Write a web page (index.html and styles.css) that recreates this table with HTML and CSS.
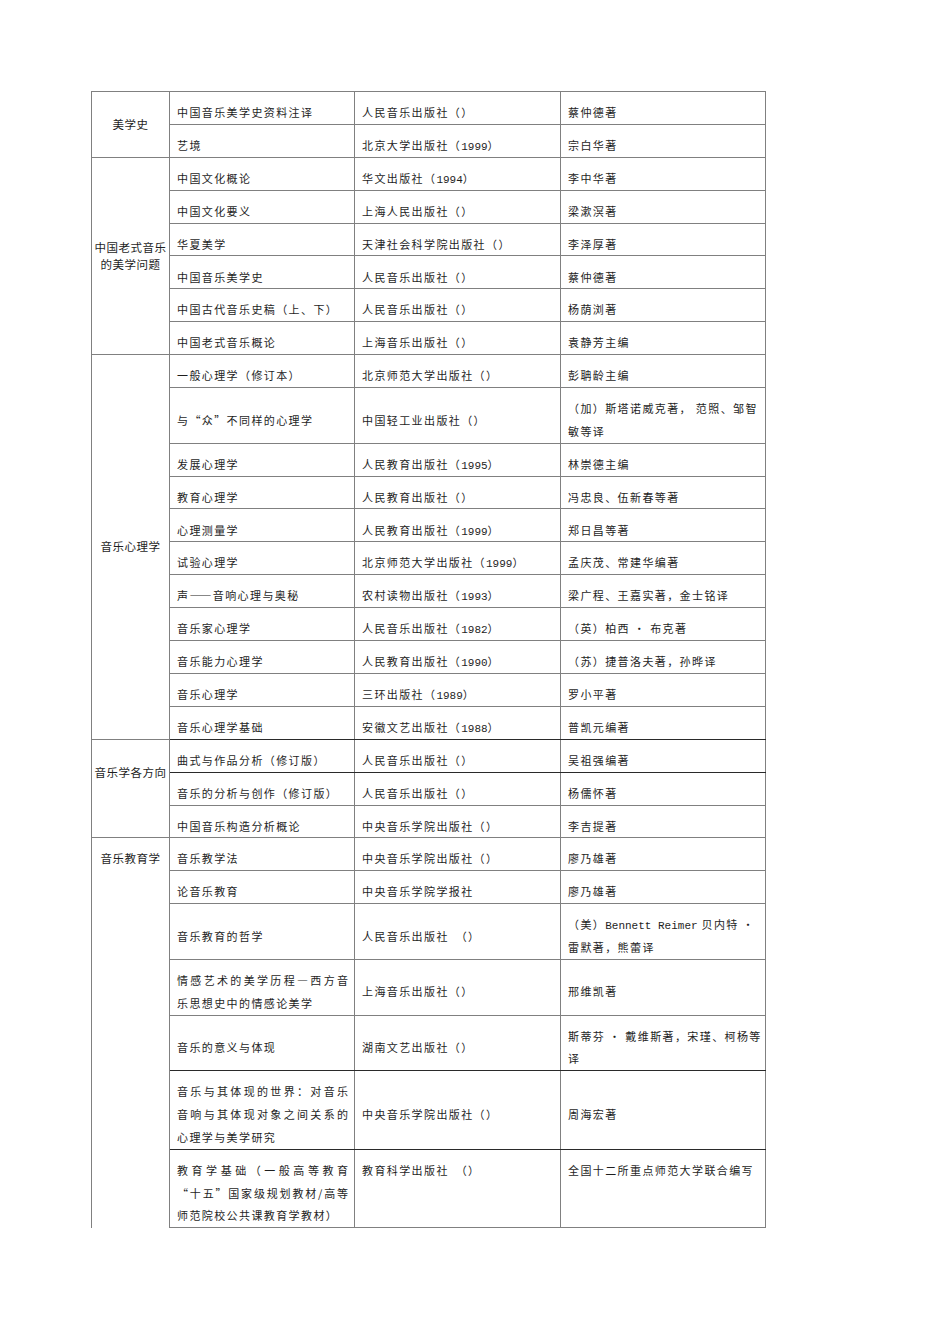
FILE: index.html
```html
<!DOCTYPE html>
<html lang="zh">
<head>
<meta charset="utf-8">
<title>参考书目</title>
<link rel="stylesheet" href="styles.css">
</head>
<body>
<table class="books">
<colgroup><col class="c1"><col class="c2"><col class="c3"><col class="c4"></colgroup>
<tr><td rowspan="2" class="cat mid">美学史</td><td>中国音乐美学史资料注译</td><td>人民音乐出版社（）</td><td>蔡仲德著</td></tr>
<tr><td>艺境</td><td>北京大学出版社（<span class="num">1999</span>）</td><td>宗白华著</td></tr>
<tr><td rowspan="6" class="cat mid tight">中国老式音乐<br>的美学问题</td><td>中国文化概论</td><td>华文出版社（<span class="num">1994</span>）</td><td>李中华著</td></tr>
<tr><td>中国文化要义</td><td>上海人民出版社（）</td><td>梁漱溟著</td></tr>
<tr><td>华夏美学</td><td>天津社会科学院出版社（）</td><td>李泽厚著</td></tr>
<tr><td>中国音乐美学史</td><td>人民音乐出版社（）</td><td>蔡仲德著</td></tr>
<tr><td>中国古代音乐史稿（上、下）</td><td>人民音乐出版社（）</td><td>杨荫浏著</td></tr>
<tr><td>中国老式音乐概论</td><td>上海音乐出版社（）</td><td>袁静芳主编</td></tr>
<tr><td rowspan="11" class="cat mid">音乐心理学</td><td>一般心理学（修订本）</td><td>北京师范大学出版社（）</td><td>彭聃龄主编</td></tr>
<tr><td class="mid">与“众”不同样的心理学</td><td class="mid">中国轻工业出版社（）</td><td><span class="line">（加）斯塔诺威克著， 范照、邹智</span><span class="line">敏等译</span></td></tr>
<tr><td>发展心理学</td><td>人民教育出版社（<span class="num">1995</span>）</td><td>林崇德主编</td></tr>
<tr><td>教育心理学</td><td>人民教育出版社（）</td><td>冯忠良、伍新春等著</td></tr>
<tr><td>心理测量学</td><td>人民教育出版社（<span class="num">1999</span>）</td><td>郑日昌等著</td></tr>
<tr><td>试验心理学</td><td>北京师范大学出版社（<span class="num">1999</span>）</td><td>孟庆茂、常建华编著</td></tr>
<tr><td>声——音响心理与奥秘</td><td>农村读物出版社（<span class="num">1993</span>）</td><td>梁广程、王嘉实著，金士铭译</td></tr>
<tr><td>音乐家心理学</td><td>人民音乐出版社（<span class="num">1982</span>）</td><td>（英）柏西 · 布克著</td></tr>
<tr><td>音乐能力心理学</td><td>人民教育出版社（<span class="num">1990</span>）</td><td>（苏）捷普洛夫著，孙晔译</td></tr>
<tr><td>音乐心理学</td><td>三环出版社（<span class="num">1989</span>）</td><td>罗小平著</td></tr>
<tr class="dk"><td>音乐心理学基础</td><td>安徽文艺出版社（<span class="num">1988</span>）</td><td>普凯元编著</td></tr>
<tr><td rowspan="3" class="cat top dir">音乐学各方向</td><td class="dkb">曲式与作品分析（修订版）</td><td class="dkb">人民音乐出版社（）</td><td class="dkb">吴祖强编著</td></tr>
<tr><td>音乐的分析与创作（修订版）</td><td>人民音乐出版社（）</td><td>杨儒怀著</td></tr>
<tr><td>中国音乐构造分析概论</td><td>中央音乐学院出版社（）</td><td>李吉提著</td></tr>
<tr><td rowspan="7" class="cat top last">音乐教育学</td><td>音乐教学法</td><td>中央音乐学院出版社（）</td><td>廖乃雄著</td></tr>
<tr><td>论音乐教育</td><td>中央音乐学院学报社</td><td>廖乃雄著</td></tr>
<tr><td class="mid">音乐教育的哲学</td><td class="mid">人民音乐出版社　（）</td><td><span class="line">（美）<span class="num">Bennett Reimer</span> 贝内特 ·</span><span class="line">雷默著，熊蕾译</span></td></tr>
<tr><td><span class="line j">情感艺术的美学历程—西方音</span><span class="line">乐思想史中的情感论美学</span></td><td class="mid">上海音乐出版社（）</td><td class="mid">邢维凯著</td></tr>
<tr class="dk"><td class="mid">音乐的意义与体现</td><td class="mid">湖南文艺出版社（）</td><td><span class="line">斯蒂芬 · 戴维斯著，宋瑾、柯杨等</span><span class="line">译</span></td></tr>
<tr class="dk"><td><span class="line j">音乐与其体现的世界：对音乐</span><span class="line j">音响与其体现对象之间关系的</span><span class="line">心理学与美学研究</span></td><td class="mid">中央音乐学院出版社（）</td><td class="mid">周海宏著</td></tr>
<tr><td><span class="line j">教育学基础（一般高等教育</span><span class="line j">“十五”国家级规划教材/高等</span><span class="line">师范院校公共课教育学教材）</span></td><td>教育科学出版社　（）</td><td>全国十二所重点师范大学联合编写</td></tr>
</table>
</body>
</html>
```
FILE: styles.css
```css
html, body {
  margin: 0;
  padding: 0;
  background: #ffffff;
}

body {
  font-family: "Noto Sans CJK SC", "Noto Sans", sans-serif;
  color: #1e1e1e;
}

.books {
  border-collapse: collapse;
  table-layout: fixed;
  width: 674px;
  margin: 91px 0 0 91px;
  font-size: 11px;
  letter-spacing: 1.4px;
}

.c1 { width: 78px; }
.c2 { width: 185px; }
.c3 { width: 206px; }
.c4 { width: 205px; }

.books td {
  border: 1px solid #808080;
  padding: 9.1px 6px 0 7px;
  line-height: 22.8px;
  vertical-align: middle;
  white-space: nowrap;
  overflow: hidden;
}

.books td.top { vertical-align: top; }
.books td.mid { vertical-align: middle; }

.books tr:last-child td { vertical-align: top; }

.books td.cat {
  text-align: center;
  padding: 0;
  letter-spacing: 0.5px;
  font-size: 11.5px;
  line-height: 17px;
}

.books td.dir { padding-top: 24px; }
.books td.cat.last { padding-top: 12px; border-bottom: none; }

.books tr.dk td { border-bottom-color: #2a2a2a; }
.books td.dkb { border-bottom-color: #2a2a2a; }

.line { display: block; }
.line.j {
  text-align: justify;
  text-align-last: justify;
  letter-spacing: 0;
}

.num {
  font-family: "Liberation Mono", monospace;
  letter-spacing: 0;
  font-size: 11px;
  line-height: 1;
}
```
